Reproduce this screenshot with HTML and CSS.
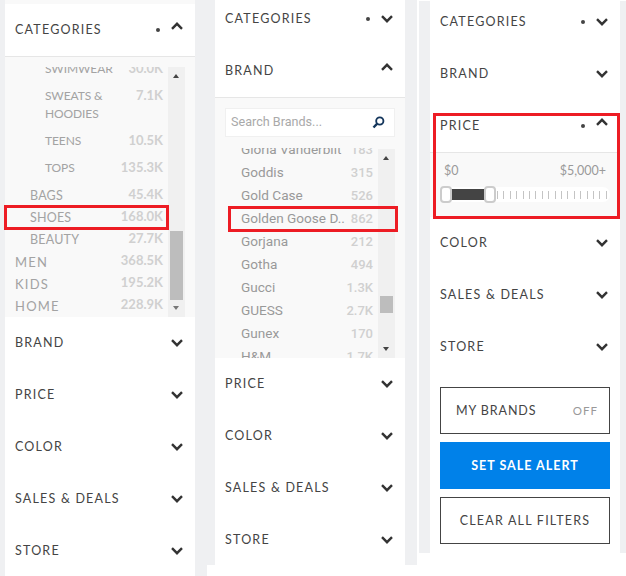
FILE: index.html
```html
<!DOCTYPE html>
<html lang="en">
<head>
<meta charset="utf-8">
<title>Filters</title>
<link rel="stylesheet" href="styles.css">
</head>
<body>
<svg class="defs" width="0" height="0" aria-hidden="true">
  <symbol id="down" viewBox="0 0 14 10"><path d="M2 2.2 7 7.2 12 2.2" fill="none" stroke="currentColor" stroke-width="2.4"/></symbol>
  <symbol id="up" viewBox="0 0 14 10"><path d="M2 7.8 7 2.8 12 7.8" fill="none" stroke="currentColor" stroke-width="2.4"/></symbol>
</svg>
<main class="sheet">

  <section class="col col-a">
    <div class="panel">
      <div class="row"><span class="title">CATEGORIES</span><i class="dot"></i><svg class="chev chev-up"><use href="#up"/></svg></div>
      <div class="body body-tall">
        <div class="scrollwrap">
          <div class="cats">
            <div class="cat deep"><span>SWIMWEAR</span><b>30.0K</b></div>
            <div class="cat deep"><span>SWEATS &amp;<br>HOODIES</span><b>7.1K</b></div>
            <div class="cat deep"><span>TEENS</span><b>10.5K</b></div>
            <div class="cat deep last"><span>TOPS</span><b>135.3K</b></div>
            <div class="cat mid"><span>BAGS</span><b>45.4K</b></div>
            <div class="cat mid"><span>SHOES</span><b>168.0K</b></div>
            <div class="cat mid"><span>BEAUTY</span><b>27.7K</b></div>
            <div class="cat top"><span>MEN</span><b>368.5K</b></div>
            <div class="cat top"><span>KIDS</span><b>195.2K</b></div>
            <div class="cat top"><span>HOME</span><b>228.9K</b></div>
          </div>
          <div class="scrollbar"><i class="arrow arrow-up"></i><i class="thumb thumb-a"></i><i class="arrow arrow-down"></i></div>
        </div>
      </div>
      <div class="row"><span class="title">BRAND</span><svg class="chev"><use href="#down"/></svg></div>
      <div class="row"><span class="title">PRICE</span><svg class="chev"><use href="#down"/></svg></div>
      <div class="row"><span class="title">COLOR</span><svg class="chev"><use href="#down"/></svg></div>
      <div class="row"><span class="title">SALES &amp; DEALS</span><svg class="chev"><use href="#down"/></svg></div>
      <div class="row"><span class="title">STORE</span><svg class="chev"><use href="#down"/></svg></div>
    </div>
    <div class="mark mark-shoes"></div>
  </section>

  <section class="col col-b">
    <div class="panel">
      <div class="row"><span class="title">CATEGORIES</span><i class="dot"></i><svg class="chev"><use href="#down"/></svg></div>
      <div class="row"><span class="title">BRAND</span><svg class="chev chev-up"><use href="#up"/></svg></div>
      <div class="body body-tall body-brand">
        <div class="search">
          <span>Search Brands...</span>
          <svg class="lens" viewBox="0 0 14 14"><circle cx="8.4" cy="5.4" r="3.9" fill="none" stroke="#14365c" stroke-width="2"/><path d="M5.6 8.2 1.6 12.4" stroke="#14365c" stroke-width="2.6"/></svg>
        </div>
        <div class="scrollwrap">
          <div class="brands">
            <div class="brand"><span>Gloria Vanderbilt</span><b>183</b></div>
            <div class="brand"><span>Goddis</span><b>315</b></div>
            <div class="brand"><span>Gold Case</span><b>526</b></div>
            <div class="brand"><span>Golden Goose D..</span><b>862</b></div>
            <div class="brand"><span>Gorjana</span><b>212</b></div>
            <div class="brand"><span>Gotha</span><b>494</b></div>
            <div class="brand"><span>Gucci</span><b>1.3K</b></div>
            <div class="brand"><span>GUESS</span><b>2.7K</b></div>
            <div class="brand"><span>Gunex</span><b>170</b></div>
            <div class="brand"><span>H&amp;M</span><b>1.7K</b></div>
          </div>
          <div class="scrollbar scrollbar-b"><i class="arrow arrow-up"></i><i class="thumb thumb-b"></i><i class="arrow arrow-down"></i></div>
        </div>
      </div>
      <div class="row"><span class="title">PRICE</span><svg class="chev"><use href="#down"/></svg></div>
      <div class="row"><span class="title">COLOR</span><svg class="chev"><use href="#down"/></svg></div>
      <div class="row"><span class="title">SALES &amp; DEALS</span><svg class="chev"><use href="#down"/></svg></div>
      <div class="row"><span class="title">STORE</span><svg class="chev"><use href="#down"/></svg></div>
    </div>
    <div class="mark mark-golden"></div>
  </section>

  <section class="col col-c">
    <div class="panel">
      <div class="row"><span class="title">CATEGORIES</span><i class="dot"></i><svg class="chev"><use href="#down"/></svg></div>
      <div class="row"><span class="title">BRAND</span><svg class="chev"><use href="#down"/></svg></div>
      <div class="row"><span class="title">PRICE</span><i class="dot"></i><svg class="chev chev-up"><use href="#up"/></svg></div>
      <div class="body body-price">
        <div class="range"><span>$0</span><span>$5,000+</span></div>
        <div class="slider"><i class="fill"></i><i class="knob knob-min"></i><i class="knob knob-max"></i></div>
      </div>
      <div class="row"><span class="title">COLOR</span><svg class="chev"><use href="#down"/></svg></div>
      <div class="row"><span class="title">SALES &amp; DEALS</span><svg class="chev"><use href="#down"/></svg></div>
      <div class="row"><span class="title">STORE</span><svg class="chev"><use href="#down"/></svg></div>
      <div class="actions">
        <div class="btn btn-split"><span>MY BRANDS</span><span class="off">OFF</span></div>
        <div class="btn btn-primary">SET SALE ALERT</div>
        <div class="btn">CLEAR ALL FILTERS</div>
      </div>
    </div>
    <div class="mark mark-price"></div>
  </section>

</main>
</body>
</html>
```

FILE: styles.css
```css
* { box-sizing: border-box; }
html, body { margin: 0; padding: 0; background: #fff; }
body { width: 626px; height: 576px; overflow: hidden; font-family: "Lato", "Liberation Sans", sans-serif; }
.defs { position: absolute; }
.sheet { display: flex; align-items: flex-start; width: 626px; height: 576px; }

.col { position: relative; background: #eff0f2; display: flex; overflow: hidden; }
.col-a { width: 207px; height: 576px; padding: 0 12px 0 5px; }
.col-b { width: 210px; height: 565px; padding: 0 12px 0 8px; z-index: 1; }
.col-c { width: 207px; height: 552px; margin: 1px 0 0 2px; padding: 0 6px 0 11px; }

.panel { width: 190px; background: #fff; overflow: hidden; flex: none; }
.col-a .panel { border-top: 4px solid #f9f9f9; }
.col-b .row:first-child { margin-top: -7px; }
.col-c .row:first-child { margin-top: -5px; }

.row { display: flex; align-items: center; height: 52px; padding: 0 11px 2px 10px; color: #444; }
.title { flex: 1; font-size: 12.5px; font-weight: 400; letter-spacing: 1.2px; white-space: nowrap; }
.dot { width: 4px; height: 4px; border-radius: 50%; background: #444; margin: 2px 10px 0 0; }
.chev { width: 14px; height: 10px; color: #333; margin-top: 2px; }
.chev-up { margin-top: -6px; }

.body { background: #f9f9f9; border-top: 1px solid #e6e6e6; }
.body-tall { height: 261px; padding-top: 10px; }
.body-brand { display: flex; flex-direction: column; }

.scrollwrap { display: flex; height: 250px; overflow: hidden; padding-right: 10px; }
.cats { flex: 1; margin-top: -11px; min-width: 0; }
.cat { display: flex; justify-content: space-between; align-items: flex-start; padding-right: 5px; letter-spacing: .2px; color: #a3a3a3; }
.cat b { font-weight: 700; font-size: 13px; color: #d0d0d0; letter-spacing: 0; margin-top: -1px; }
.deep { padding: 4px 5px 5px 40px; font-size: 12px; line-height: 18px; letter-spacing: -.1px; }
.deep.last { margin-bottom: 3px; }
.mid { padding-left: 25px; height: 22px; font-size: 12.5px; line-height: 22px; }
.top { padding-left: 10px; height: 22px; font-size: 13px; line-height: 22px; letter-spacing: 1.2px; }
.top b, .mid b { line-height: 22px; margin-top: -2px; }

.scrollbar { position: relative; flex: none; width: 17px; background: #f0f0f0; }
.scrollbar-b { margin-top: 1px; }
.thumb { position: absolute; left: 2px; width: 13px; background: #bdbdbd; }
.thumb-a { top: 164px; height: 69px; }
.thumb-b { top: 147px; height: 17px; }
.arrow { position: absolute; left: 5px; width: 0; height: 0; border-left: 3.5px solid transparent; border-right: 3.5px solid transparent; }
.arrow-up { top: 7px; border-bottom: 4px solid #444; }
.arrow-down { bottom: 7px; border-top: 4px solid #777; }
.scrollbar-b .arrow-down { border-top-color: #444; }

.search { display: flex; align-items: center; justify-content: space-between; flex: none; width: 170px; height: 29px; margin: 0 10px 11px; padding: 0 9px 3px 5px; background: #fff; border: 1px solid #f0f0f0; font-family: "Roboto", "Liberation Sans", sans-serif; font-size: 12.6px; color: #a9a9a9; }
.lens { width: 13px; height: 13px; margin-top: 3px; }

.body-brand { padding-top: 10px; }
.body-brand .scrollwrap { height: 210px; }
.brands { flex: 1; margin-top: -10px; min-width: 0; font-family: "Roboto", "Liberation Sans", sans-serif; }
.brand { display: flex; justify-content: space-between; height: 23px; line-height: 23px; padding: 0 5px 0 26px; font-size: 13.6px; color: #999; }
.brand b { font-weight: 500; font-size: 13px; color: #d0d0d0; }

.body-price { height: 65px; padding: 10px 14px 0 10px; }
.range { display: flex; justify-content: space-between; padding: 0 0 0 4px; font-size: 12.5px; line-height: 16px; font-weight: 400; color: #9a9a9a; }
.slider { position: relative; height: 15px; margin-top: 8px; width: 170px; border-radius: 7px; background: repeating-linear-gradient(to right, #c4c4c4 0 1px, transparent 1px 6.4px) 57px 4px / 112px 8px no-repeat, #fff; }
.fill { position: absolute; left: 6px; top: 2px; width: 44px; height: 11px; background: #444; }
.knob { position: absolute; top: -1px; width: 12px; height: 17px; background: #fff; border: 2px solid #ccc; border-radius: 4px; }
.knob-min { left: 0; }
.knob-max { left: 44px; }

.actions { display: flex; flex-direction: column; gap: 8px; padding: 14px 10px 0; }
.btn { display: flex; align-items: center; justify-content: center; height: 47px; border: 1px solid #444; font-size: 12.5px; font-weight: 400; letter-spacing: 1.2px; color: #444; white-space: nowrap; }
.btn-split { justify-content: space-between; padding: 0 11px 0 15px; letter-spacing: .9px; }
.off { color: #999; letter-spacing: 1px; font-size: 11.5px; margin-top: -1px; }
.btn-primary { background: #0081e9; border: 0; color: #fff; font-weight: 700; letter-spacing: 1px; }

.mark { position: absolute; border: 3px solid #ed1c24; pointer-events: none; }
.mark-shoes { left: 4px; top: 205px; width: 165px; height: 25px; }
.mark-golden { left: 21px; top: 206px; width: 170px; height: 26px; }
.mark-price { left: 14px; top: 112px; width: 187px; height: 106px; }
```
